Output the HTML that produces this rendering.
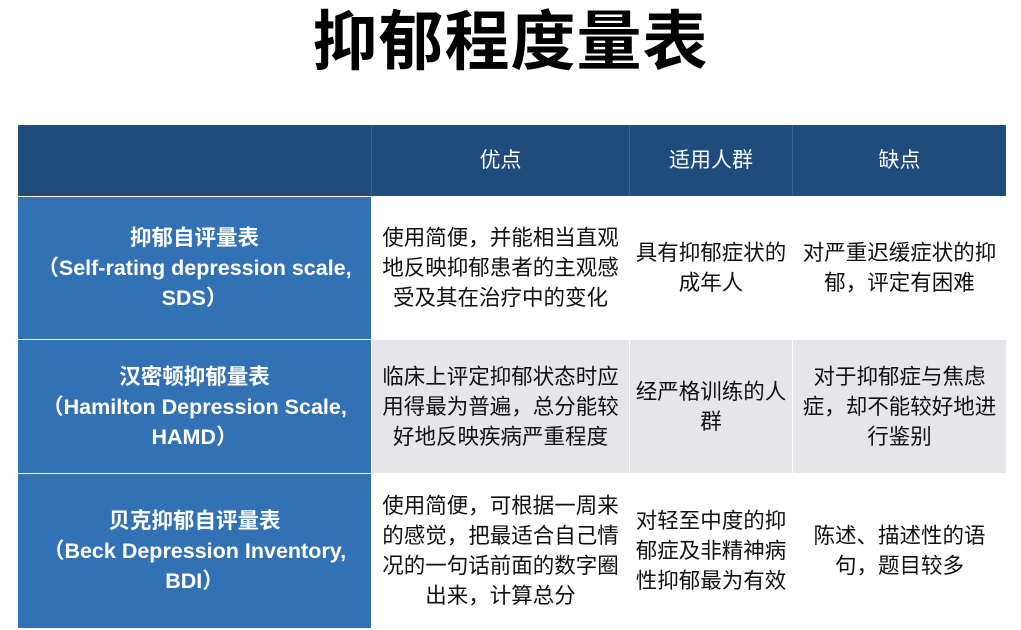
<!DOCTYPE html>
<html><head><meta charset="utf-8"><style>
body{margin:0;width:1021px;height:630px;background:#fff;position:relative;overflow:hidden;font-family:"Liberation Sans","Noto Sans CJK SC",sans-serif}
h1{position:absolute;left:0;top:2px;width:1021px;margin:0;text-align:center;font-size:65px;font-weight:bold;line-height:80px;color:#000;letter-spacing:1px}
.c{position:absolute;display:flex;align-items:center;justify-content:center;text-align:center;box-sizing:border-box;font-size:21.5px;line-height:30px;color:#111;white-space:nowrap}
.h{background:#1f4b7d;color:#fff;font-size:21px}
.l{background:#3371b5;color:#fff;font-weight:bold;font-size:21.5px;line-height:30px}
.g{background:#e5e5ea}
</style></head><body>
<h1>抑郁程度量表</h1>
<div style="position:absolute;left:18px;top:125px;width:988px;height:71px;background:#3a6192"></div>
<div class="c h" style="left:18px;top:125px;width:353px;height:71px"></div>
<div class="c h" style="left:372px;top:125px;width:257px;height:71px">优点</div>
<div class="c h" style="left:630px;top:125px;width:162px;height:71px">适用人群</div>
<div class="c h" style="left:793px;top:125px;width:213px;height:71px">缺点</div>

<div class="c l" style="left:18px;top:197px;width:353px;height:142px">抑郁自评量表<br>（Self-rating depression scale,<br>SDS）</div>
<div class="c" style="left:372px;top:197px;width:257px;height:142px">使用简便，并能相当直观<br>地反映抑郁患者的主观感<br>受及其在治疗中的变化</div>
<div class="c" style="left:630px;top:197px;width:162px;height:142px">具有抑郁症状的<br>成年人</div>
<div class="c" style="left:793px;top:197px;width:213px;height:142px">对严重迟缓症状的抑<br>郁，评定有困难</div>

<div class="c l" style="left:18px;top:340px;width:353px;height:133px">汉密顿抑郁量表<br>（Hamilton Depression Scale,<br>HAMD）</div>
<div class="c g" style="left:372px;top:340px;width:257px;height:133px">临床上评定抑郁状态时应<br>用得最为普遍，总分能较<br>好地反映疾病严重程度</div>
<div class="c g" style="left:630px;top:340px;width:162px;height:133px">经严格训练的人<br>群</div>
<div class="c g" style="left:793px;top:340px;width:213px;height:133px">对于抑郁症与焦虑<br>症，却不能较好地进<br>行鉴别</div>

<div class="c l" style="left:18px;top:474px;width:353px;height:154px">贝克抑郁自评量表<br>（Beck Depression Inventory,<br>BDI）</div>
<div class="c" style="left:372px;top:474px;width:257px;height:154px">使用简便，可根据一周来<br>的感觉，把最适合自己情<br>况的一句话前面的数字圈<br>出来，计算总分</div>
<div class="c" style="left:630px;top:474px;width:162px;height:154px">对轻至中度的抑<br>郁症及非精神病<br>性抑郁最为有效</div>
<div class="c" style="left:793px;top:474px;width:213px;height:154px">陈述、描述性的语<br>句，题目较多</div>
</body></html>
